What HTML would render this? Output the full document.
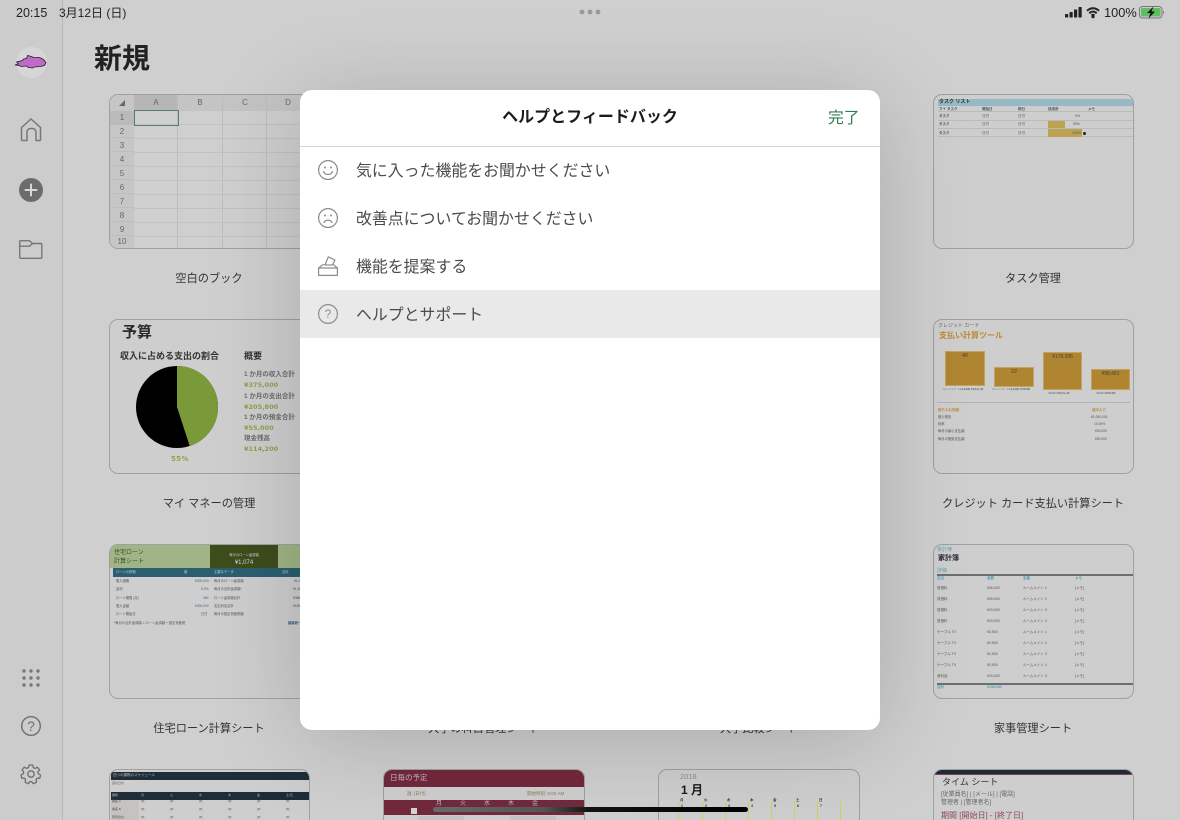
<!DOCTYPE html>
<html lang="ja"><head><meta charset="utf-8"><title>ヘルプとフィードバック</title>
<style>
*{box-sizing:border-box;margin:0;padding:0}
html,body{width:1180px;height:820px;overflow:hidden;background:#cfcfcf;font-family:"Liberation Sans","Noto Sans CJK JP",sans-serif;color:#222}
div,span{position:absolute;white-space:nowrap}
svg{position:absolute;overflow:visible}
#root{left:0;top:0;width:1180px;height:820px;overflow:hidden;background:#cfcfcf}
#back{left:0;top:0;width:1180px;height:820px;overflow:hidden;filter:blur(.3px)}
#side{left:0;top:0;width:63px;height:820px;background:#cccccc;border-right:1px solid #b5b6b5}
.card{width:201px;height:155px;border:1px solid #a0a0a0;border-radius:9px;overflow:hidden;background:#cecece}
.inner{left:0;top:0;width:199px;height:153px;filter:blur(.35px)}
.r4{height:51px;border-bottom:0;border-radius:9px 9px 0 0}
.r4 .inner{height:50px;overflow:hidden}
.lab{font-size:11.2px;color:#333;width:274px;text-align:center;line-height:16px}
.t{font-size:5px;line-height:7px;color:#555}
.b{font-weight:bold}
#modal{left:300px;top:90px;width:580px;height:640px;background:#fff;border-radius:12px;overflow:hidden;box-shadow:0 10px 90px rgba(0,0,0,.18)}
.row{left:56px;font-size:15.9px;line-height:24px;color:#4b4b4b}
.h{font-size:8px;color:#666;line-height:10px;text-align:center}
.rn{font-size:8px;color:#666;line-height:14px;width:24px;text-align:center;left:0}
</style></head><body>
<div id="root">
<div id="back">
<div id="side"></div>

<div style="left:16px;top:4.500px;font-size:12.500px;line-height:16px;color:#222">20:15</div>
<div style="left:59px;top:4.500px;font-size:12px;line-height:16px;color:#222">3月12日 (日)</div>
<svg style="left:579px;top:9px" width="22" height="6"><circle cx="3" cy="3" r="2.400" fill="#9a9a9a"/><circle cx="11" cy="3" r="2.400" fill="#9a9a9a"/><circle cx="19" cy="3" r="2.400" fill="#9a9a9a"/></svg>
<svg style="left:1065px;top:7px" width="18" height="11"><rect x="0" y="7" width="3.200" height="3.500" rx=".6" fill="#222"/><rect x="4.500" y="5" width="3.200" height="5.500" rx=".6" fill="#222"/><rect x="9" y="2.500" width="3.200" height="8" rx=".6" fill="#222"/><rect x="13.500" y="0" width="3.200" height="10.500" rx=".6" fill="#222"/></svg>
<svg style="left:1086px;top:7px" width="14" height="11" fill="none" stroke="#222" stroke-width="2"><path d="M1 3.800C4.600 .4 9.400 .4 13 3.800"/><path d="M3.300 6.200C5.600 4.100 8.400 4.100 10.700 6.200"/><path d="M5.500 8.400C6.400 7.600 7.600 7.600 8.500 8.400"/><circle cx="7" cy="9.700" r=".6" fill="#222"/></svg>
<div style="left:1104px;top:4.500px;font-size:12.800px;line-height:16px;color:#222">100%</div>
<svg style="left:1139px;top:6px" width="26" height="13"><rect x=".5" y=".5" width="22.500" height="11.500" rx="3" fill="none" stroke="#777"/><rect x="2" y="2" width="19.500" height="8.500" rx="1.500" fill="#5fbe62"/><path d="M24 4.500c1.300.3 1.300 3.200 0 3.500z" fill="#777"/><path d="M14.500 .5L8 7h3.500l-2 5.500L16 5.500h-3.500z" fill="#111"/></svg>

<!-- sidebar icons -->
<div style="left:16px;top:47px;width:31px;height:31px;border-radius:50%;background:#d6d6d6"></div>
<svg style="left:0;top:0" width="60" height="80"><path d="M16.500 62l6-1.500 1-1.500 3-.5 1-3 4 1 2 1 6 0 4 2 2.500 3-1.500 3-4 1-6 .500-2 1-4-.5-2-1.500-5 .5-3-1-3.500-.5 3.500-1.200z" fill="#bf69c8" stroke="#26222a" stroke-width=".8"/></svg>
<svg style="left:20px;top:118px" width="22" height="24" fill="none" stroke="#777" stroke-width="1.500" stroke-linejoin="round"><path d="M1.500 9.500L11 1l9.500 8.500V21.500a1 1 0 0 1-1 1h-3.500V14a3.500 3.500 0 0 0-3.500-3.500h-1.500A3.500 3.500 0 0 0 7 14v8.500H2.500a1 1 0 0 1-1-1z"/></svg>
<svg style="left:19px;top:178px" width="24" height="24"><circle cx="12" cy="12" r="12" fill="#6c6c6c"/><path d="M12 6.500v11M6.500 12h11" stroke="#d8d8d8" stroke-width="2" stroke-linecap="round"/></svg>
<svg style="left:19px;top:240px" width="24" height="20" fill="none" stroke="#777" stroke-width="1.400" stroke-linejoin="round"><path d="M.7 1.700a1 1 0 0 1 1-1h8.800l3 2.800h8.300a1 1 0 0 1 1 1v12.800a1 1 0 0 1-1 1H1.700a1 1 0 0 1-1-1z"/><path d="M.7 6.200h9.800l3-2.700"/></svg>
<svg style="left:22px;top:669px" width="18" height="18" fill="#777"><circle cx="2" cy="2" r="1.700"/><circle cx="9" cy="2" r="1.700"/><circle cx="16" cy="2" r="1.700"/><circle cx="2" cy="9" r="1.700"/><circle cx="9" cy="9" r="1.700"/><circle cx="16" cy="9" r="1.700"/><circle cx="2" cy="16" r="1.700"/><circle cx="9" cy="16" r="1.700"/><circle cx="16" cy="16" r="1.700"/></svg>
<svg style="left:21px;top:716px" width="20" height="20" fill="none" stroke="#6f6f6f" stroke-width="1.400"><circle cx="10" cy="10" r="9.300"/></svg>
<div style="left:21px;top:716px;width:20px;text-align:center;font-size:14px;line-height:20px;color:#6f6f6f">?</div>
<svg style="left:21px;top:764px" width="20" height="20" fill="none" stroke="#6f6f6f" stroke-width="1.300" stroke-linejoin="round"><path d="M8.300 1h3.400l.6 2.600 1.700.8 2.400-1.200 2.200 2.700-1.700 2 .4 1.900 2.300 1.100-.8 3.300-2.600 0-1.200 1.500.5 2.600-3.200 1.400-1.600-2.100h-1.800l-1.600 2.100-3.200-1.400.5-2.600-1.200-1.500-2.600 0-.8-3.300 2.300-1.100.4-1.900-1.700-2 2.200-2.700 2.400 1.200 1.700-.8z"/><circle cx="10" cy="10" r="3.200"/></svg>

<div style="left:94px;top:41px;font-size:28px;line-height:36px;font-weight:bold;color:#222">新規</div>

<!-- blank sheet -->
<div class="card" style="left:109px;top:94px;background:#cfcfcf"><div class="inner" style="filter:none">
  <div style="left:0;top:0;width:199px;height:16px;background:#c3c4c3"></div>
  <div style="left:0;top:0;width:24px;height:153px;background:#c5c6c5"></div>
  <div style="left:24px;top:0;width:44px;height:16px;background:#b5b6b5"></div>
  <div style="left:0;top:16px;width:24px;height:14px;background:#b9bab9"></div>
  <div style="left:24px;top:16px;width:175px;height:137px;background-image:repeating-linear-gradient(to bottom,transparent 0,transparent 13px,#c1c2c1 13px,#c1c2c1 14px)"></div>
  <div style="left:0;top:29px;width:24px;height:124px;background-image:repeating-linear-gradient(to bottom,transparent 0,transparent 13px,#bcbdbc 13px,#bcbdbc 14px)"></div>
  <div style="left:67px;top:0;width:1px;height:153px;background:#bcbdbc"></div>
  <div style="left:112px;top:0;width:1px;height:153px;background:#bcbdbc"></div>
  <div style="left:156px;top:0;width:1px;height:153px;background:#bcbdbc"></div>
  <svg style="left:8px;top:4px" width="8" height="8"><path d="M7 1v6H1z" fill="#666"/></svg>
  <div class="h" style="left:24px;top:3px;width:44px">A</div><div class="h" style="left:68px;top:3px;width:44px">B</div><div class="h" style="left:113px;top:3px;width:44px">C</div><div class="h" style="left:157px;top:3px;width:42px">D</div>
  <div class="rn" style="top:16px">1</div><div class="rn" style="top:30px">2</div><div class="rn" style="top:44px">3</div><div class="rn" style="top:58px">4</div><div class="rn" style="top:72px">5</div><div class="rn" style="top:86px">6</div><div class="rn" style="top:100px">7</div><div class="rn" style="top:114px">8</div><div class="rn" style="top:128px">9</div><div class="rn" style="top:140px;line-height:13px">10</div>
  <div style="left:24px;top:15px;width:45px;height:16px;border:1px solid #5d7c68"></div>
</div></div>
<div class="lab" style="left:72px;top:271px">空白のブック</div>

<!-- task -->
<div class="card" style="left:933px;top:94px"><div class="inner">
  <div style="left:4px;top:4px;width:195px;height:7px;background:#97b9c3"></div>
  <div class="t b" style="left:5px;top:4px;color:#333">タスク リスト</div>
  <div class="t b" style="left:5px;top:11px;font-size:3.500px;color:#456">マイ タスク</div><div class="t b" style="left:48px;top:11px;font-size:3.500px;color:#456">開始日</div><div class="t b" style="left:84px;top:11px;font-size:3.500px;color:#456">期日</div><div class="t b" style="left:114px;top:11px;font-size:3.500px;color:#456">達成度</div><div class="t b" style="left:154px;top:11px;font-size:3.500px;color:#456">メモ</div>
  <div style="left:4px;top:16px;width:195px;height:1px;background:#bbb"></div><div style="left:4px;top:25px;width:195px;height:1px;background:#bbb"></div><div style="left:4px;top:33px;width:195px;height:1px;background:#bbb"></div><div style="left:4px;top:41px;width:195px;height:1px;background:#bbb"></div>
  <div style="left:114px;top:26px;width:17px;height:7px;background:#bda252"></div><div style="left:114px;top:34px;width:34px;height:8px;background:#bda252"></div>
  <div class="t b" style="left:5px;top:18px;font-size:3.500px">タスク</div><div class="t" style="left:48px;top:18px;font-size:3.500px">日付</div><div class="t" style="left:84px;top:18px;font-size:3.500px">日付</div><div class="t" style="left:141px;top:18px;font-size:3.500px">0%</div>
  <div class="t b" style="left:5px;top:26px;font-size:3.500px">タスク</div><div class="t" style="left:48px;top:26px;font-size:3.500px">日付</div><div class="t" style="left:84px;top:26px;font-size:3.500px">日付</div><div class="t" style="left:139px;top:26px;font-size:3.500px">50%</div>
  <div class="t b" style="left:5px;top:35px;font-size:3.500px">タスク</div><div class="t" style="left:48px;top:35px;font-size:3.500px">日付</div><div class="t" style="left:84px;top:35px;font-size:3.500px">日付</div><div class="t" style="left:138px;top:35px;font-size:3.500px">100%</div>
  <div style="left:149px;top:37px;width:3px;height:3px;border-radius:50%;background:#222"></div>
</div></div>
<div class="lab" style="left:896px;top:271px">タスク管理</div>

<!-- budget -->
<div class="card" style="left:109px;top:319px"><div class="inner">
  <div class="b" style="left:12px;top:4px;font-size:15px;line-height:18px;color:#2b2b2b">予算</div>
  <div class="b" style="left:10px;top:30px;font-size:9px;line-height:12px;color:#333">収入に占める支出の割合</div>
  <div class="b" style="left:134px;top:30px;font-size:9px;line-height:12px;color:#333">概要</div>
  <svg style="left:25px;top:45px" width="84" height="84"><circle cx="42" cy="42" r="41" fill="#000"/><path d="M42 42V1A41 41 0 0 1 54.700 81z" fill="#7a9a3a"/></svg>
  <div class="b" style="left:61px;top:134px;font-size:7px;line-height:10px;color:#8ba550;letter-spacing:.3px;font-family:'DejaVu Sans',sans-serif">55%</div>
  <div class="b" style="left:134px;top:50px;font-size:6.500px;line-height:9px;color:#6b6b6b">1 か月の収入合計</div>
  <div class="b" style="left:134px;top:61px;font-size:6.500px;line-height:9px;color:#8aa450;font-family:'DejaVu Sans',sans-serif">¥375,000</div>
  <div class="b" style="left:134px;top:72px;font-size:6.500px;line-height:9px;color:#6b6b6b">1 か月の支出合計</div>
  <div class="b" style="left:134px;top:83px;font-size:6.500px;line-height:9px;color:#8aa450;font-family:'DejaVu Sans',sans-serif">¥205,800</div>
  <div class="b" style="left:134px;top:93px;font-size:6.500px;line-height:9px;color:#6b6b6b">1 か月の預金合計</div>
  <div class="b" style="left:134px;top:104px;font-size:6.500px;line-height:9px;color:#8aa450;font-family:'DejaVu Sans',sans-serif">¥55,000</div>
  <div class="b" style="left:134px;top:114px;font-size:6.500px;line-height:9px;color:#6b6b6b">現金残高</div>
  <div class="b" style="left:134px;top:125px;font-size:6.500px;line-height:9px;color:#8aa450;font-family:'DejaVu Sans',sans-serif">¥114,200</div>
</div></div>
<div class="lab" style="left:72px;top:496px">マイ マネーの管理</div>

<!-- credit -->
<div class="card" style="left:933px;top:319px"><div class="inner">
  <div class="t" style="left:4px;top:3px;font-size:5px;color:#666">クレジット カード</div>
  <div class="b" style="left:5px;top:10px;font-size:8px;line-height:12px;color:#bd8a34">支払い計算ツール</div>
  <div style="left:11px;top:31px;width:40px;height:35px;background:#b08532;border:1px solid #c3a15f"></div>
  <div style="left:60px;top:47px;width:40px;height:20px;background:#b08532;border:1px solid #c3a15f"></div>
  <div style="left:109px;top:32px;width:39px;height:38px;background:#b08532;border:1px solid #c3a15f"></div>
  <div style="left:157px;top:49px;width:39px;height:21px;background:#b08532;border:1px solid #c3a15f"></div>
  <div class="t" style="left:11px;top:33px;width:40px;text-align:center;font-size:5.500px;color:#4a4030">40</div>
  <div class="t" style="left:60px;top:49px;width:40px;text-align:center;font-size:5.500px;color:#4a4030">22</div>
  <div class="t" style="left:109px;top:34px;width:39px;text-align:center;font-size:5px;color:#4a4030">¥178,395</div>
  <div class="t" style="left:157px;top:51px;width:39px;text-align:center;font-size:5px;color:#4a4030">¥98,481</div>
  <div class="t" style="left:9px;top:67px;font-size:2.100px;color:#444">クレジットカードの支払回数 最低支払い額</div>
  <div class="t" style="left:58px;top:67px;font-size:2.100px;color:#444">クレジットカードの支払回数 最低返済額</div>
  <div class="t" style="left:114px;top:71px;font-size:2.100px;color:#444">合計金利 最低支払い額</div>
  <div class="t" style="left:162px;top:71px;font-size:2.100px;color:#444">合計金利 最低返済額</div>
  <div style="left:3px;top:82px;width:193px;height:1px;background:#b2b2b2"></div>
  <div class="t b" style="left:4px;top:87px;font-size:3.500px;color:#b98c3c">借り入れ詳細</div>
  <div class="t b" style="left:158px;top:87px;font-size:3.500px;color:#b98c3c">値の入力</div>
  <div class="t" style="left:4px;top:94px;font-size:3.300px">借入残高</div><div class="t" style="left:157px;top:94px;font-size:3.300px">¥1,000,000</div>
  <div class="t" style="left:4px;top:101px;font-size:3.300px">利率</div><div class="t" style="left:160px;top:101px;font-size:3.300px">10.00%</div>
  <div class="t" style="left:4px;top:108px;font-size:3.300px">毎月の最小支払額</div><div class="t" style="left:161px;top:108px;font-size:3.300px">¥30,000</div>
  <div class="t" style="left:4px;top:116px;font-size:3.300px">毎月の推奨支払額</div><div class="t" style="left:161px;top:116px;font-size:3.300px">¥50,000</div>
</div></div>
<div class="lab" style="left:896px;top:496px">クレジット カード支払い計算シート</div>

<!-- mortgage -->
<div class="card" style="left:109px;top:544px"><div class="inner">
  <div style="left:0;top:0;width:199px;height:23px;background:#9fb585"></div>
  <div style="left:100px;top:0;width:68px;height:23px;background:#3e4d1c"></div>
  <div class="t" style="left:4px;top:4px;font-size:6px;line-height:8px;color:#3a4a2a">住宅ローン</div>
  <div class="t" style="left:4px;top:13px;font-size:6px;line-height:8px;color:#3a4a2a">計算シート</div>
  <div class="t" style="left:100px;top:7px;width:68px;text-align:center;font-size:3.300px;color:#ccd">毎月のローン返済額</div>
  <div class="t" style="left:100px;top:14px;width:68px;text-align:center;font-size:6px;line-height:8px;color:#cdd">¥1,074</div>
  <div style="left:3px;top:23px;width:196px;height:9px;background:#2b5f70"></div>
  <div class="t" style="left:6px;top:24px;font-size:3.300px;color:#bcd">ローンの詳細</div><div class="t" style="left:74px;top:24px;font-size:3.300px;color:#bcd">値</div><div class="t" style="left:104px;top:24px;font-size:3.300px;color:#bcd">主要なデータ</div><div class="t" style="left:172px;top:24px;font-size:3.300px;color:#bcd">合計</div>
  <div class="t" style="left:6px;top:33px;font-size:3.300px">購入価格</div><div class="t" style="left:85px;top:33px;font-size:3.300px;color:#467">¥300,000</div><div class="t" style="left:104px;top:33px;font-size:3.300px">毎月のローン返済額</div><div class="t" style="left:184px;top:33px;font-size:3.300px">¥1,074</div>
  <div class="t" style="left:6px;top:41px;font-size:3.300px">金利</div><div class="t" style="left:91px;top:41px;font-size:3.300px;color:#467">5.0%</div><div class="t" style="left:104px;top:41px;font-size:3.300px">毎月の合計返済額*</div><div class="t" style="left:183px;top:41px;font-size:3.300px">¥1,520</div>
  <div class="t" style="left:6px;top:50px;font-size:3.300px">ローン期間 (月)</div><div class="t" style="left:93px;top:50px;font-size:3.300px;color:#467">360</div><div class="t" style="left:104px;top:50px;font-size:3.300px">ローン返済額合計</div><div class="t" style="left:183px;top:50px;font-size:3.300px">¥386,511</div>
  <div class="t" style="left:6px;top:58px;font-size:3.300px">借入金額</div><div class="t" style="left:85px;top:58px;font-size:3.300px;color:#467">¥300,000</div><div class="t" style="left:104px;top:58px;font-size:3.300px">支払利息合計</div><div class="t" style="left:183px;top:58px;font-size:3.300px">¥189,767</div>
  <div class="t" style="left:6px;top:66px;font-size:3.300px">ローン開始日</div><div class="t" style="left:91px;top:66px;font-size:3.300px;color:#467">日付</div><div class="t" style="left:104px;top:66px;font-size:3.300px">毎月の固定資産税額</div>
  <div class="t" style="left:4px;top:75px;font-size:3.300px">*毎月の合計返済額 = ローン返済額 + 固定資産税</div>
  <div class="t b" style="left:178px;top:75px;font-size:3.300px;color:#357">最新統一</div>
</div></div>
<div class="lab" style="left:72px;top:721px">住宅ローン計算シート</div>

<!-- household -->
<div class="card" style="left:933px;top:544px"><div class="inner">
  <div class="t" style="left:3px;top:2px;font-size:5px;color:#5ea6b4">家計簿</div>
  <div class="b" style="left:4px;top:9px;font-size:7px;line-height:10px;color:#222">家計簿</div>
  <div class="t" style="left:3px;top:23px;font-size:5px;color:#5ea6b4">詳細</div>
  <div style="left:3px;top:29px;width:196px;height:1.500px;background:#6e6e6e"></div>
  <div class="t b" style="left:3px;top:30px;font-size:3.500px;color:#4f9cb0">支出</div><div class="t b" style="left:53px;top:30px;font-size:3.500px;color:#4f9cb0">金額</div><div class="t b" style="left:89px;top:30px;font-size:3.500px;color:#4f9cb0">名義</div><div class="t b" style="left:141px;top:30px;font-size:3.500px;color:#4f9cb0">メモ</div>
  <div class="t" style="left:3px;top:40px;font-size:3.500px">賃借料</div><div class="t" style="left:53px;top:40px;font-size:3.500px">¥36,000</div><div class="t" style="left:89px;top:40px;font-size:3.500px">ルームメイト 1</div><div class="t" style="left:141px;top:40px;font-size:3.500px">[メモ]</div>
  <div class="t" style="left:3px;top:51px;font-size:3.500px">賃借料</div><div class="t" style="left:53px;top:51px;font-size:3.500px">¥35,000</div><div class="t" style="left:89px;top:51px;font-size:3.500px">ルームメイト 2</div><div class="t" style="left:141px;top:51px;font-size:3.500px">[メモ]</div>
  <div class="t" style="left:3px;top:62px;font-size:3.500px">賃借料</div><div class="t" style="left:53px;top:62px;font-size:3.500px">¥20,000</div><div class="t" style="left:89px;top:62px;font-size:3.500px">ルームメイト 3</div><div class="t" style="left:141px;top:62px;font-size:3.500px">[メモ]</div>
  <div class="t" style="left:3px;top:73px;font-size:3.500px">賃借料</div><div class="t" style="left:53px;top:73px;font-size:3.500px">¥20,000</div><div class="t" style="left:89px;top:73px;font-size:3.500px">ルームメイト 4</div><div class="t" style="left:141px;top:73px;font-size:3.500px">[メモ]</div>
  <div class="t" style="left:3px;top:84px;font-size:3.500px">ケーブル TV</div><div class="t" style="left:53px;top:84px;font-size:3.500px">¥2,500</div><div class="t" style="left:89px;top:84px;font-size:3.500px">ルームメイト 1</div><div class="t" style="left:141px;top:84px;font-size:3.500px">[メモ]</div>
  <div class="t" style="left:3px;top:95px;font-size:3.500px">ケーブル TV</div><div class="t" style="left:53px;top:95px;font-size:3.500px">¥2,500</div><div class="t" style="left:89px;top:95px;font-size:3.500px">ルームメイト 2</div><div class="t" style="left:141px;top:95px;font-size:3.500px">[メモ]</div>
  <div class="t" style="left:3px;top:106px;font-size:3.500px">ケーブル TV</div><div class="t" style="left:53px;top:106px;font-size:3.500px">¥2,500</div><div class="t" style="left:89px;top:106px;font-size:3.500px">ルームメイト 3</div><div class="t" style="left:141px;top:106px;font-size:3.500px">[メモ]</div>
  <div class="t" style="left:3px;top:117px;font-size:3.500px">ケーブル TV</div><div class="t" style="left:53px;top:117px;font-size:3.500px">¥2,500</div><div class="t" style="left:89px;top:117px;font-size:3.500px">ルームメイト 4</div><div class="t" style="left:141px;top:117px;font-size:3.500px">[メモ]</div>
  <div class="t" style="left:3px;top:128px;font-size:3.500px">食料品</div><div class="t" style="left:53px;top:128px;font-size:3.500px">¥15,000</div><div class="t" style="left:89px;top:128px;font-size:3.500px">ルームメイト 3</div><div class="t" style="left:141px;top:128px;font-size:3.500px">[メモ]</div>
  <div style="left:3px;top:138px;width:196px;height:1.500px;background:#6e6e6e"></div>
  <div class="t b" style="left:3px;top:139px;font-size:3.500px;color:#4f9cb0">合計</div><div class="t b" style="left:53px;top:139px;font-size:3.500px;color:#4f9cb0">¥136,000</div>
</div></div>
<div class="lab" style="left:896px;top:721px">家事管理シート</div>

<!-- hidden labels -->
<div class="lab" style="left:347px;top:721px">大学の科目管理シート</div>
<div class="lab" style="left:622px;top:721px">大学比較シート</div>

<!-- row 4 -->
<div class="card r4" style="left:109px;top:769px"><div class="inner">
  <div style="left:1px;top:2px;width:198px;height:8px;background:#1f2d38"></div>
  <div class="t" style="left:3px;top:2px;font-size:3.500px;color:#bbb">四つの課題のスケジュール</div>
  <div class="t" style="left:2px;top:11px;font-size:3px;line-height:5px">週の日付</div>
  <div style="left:1px;top:22px;width:198px;height:8px;background:#1f2d38"></div>
  <div class="t" style="left:2px;top:22px;font-size:3px;color:#bbb">課題</div><div class="t" style="left:31px;top:22px;font-size:3px;color:#bbb">月</div><div class="t" style="left:60px;top:22px;font-size:3px;color:#bbb">火</div><div class="t" style="left:89px;top:22px;font-size:3px;color:#bbb">水</div><div class="t" style="left:118px;top:22px;font-size:3px;color:#bbb">木</div><div class="t" style="left:147px;top:22px;font-size:3px;color:#bbb">金</div><div class="t" style="left:176px;top:22px;font-size:3px;color:#bbb">土/日</div>
  <div style="left:1px;top:30px;width:28px;height:20px;background:#c5c3c0"></div>
  <div class="t" style="left:2px;top:29px;font-size:3px;line-height:5px">講座 A</div><div class="t" style="left:2px;top:37px;font-size:3px;line-height:5px">講座 B</div><div class="t" style="left:2px;top:45px;font-size:3px;line-height:5px">研究会社</div>
  <div class="t" style="left:31px;top:29px;font-size:3px;line-height:5px">[#]</div><div class="t" style="left:60px;top:29px;font-size:3px;line-height:5px">[#]</div><div class="t" style="left:89px;top:29px;font-size:3px;line-height:5px">[#]</div><div class="t" style="left:118px;top:29px;font-size:3px;line-height:5px">[#]</div><div class="t" style="left:147px;top:29px;font-size:3px;line-height:5px">[#]</div><div class="t" style="left:176px;top:29px;font-size:3px;line-height:5px">[#]</div>
  <div class="t" style="left:31px;top:37px;font-size:3px;line-height:5px">[#]</div><div class="t" style="left:60px;top:37px;font-size:3px;line-height:5px">[#]</div><div class="t" style="left:89px;top:37px;font-size:3px;line-height:5px">[#]</div><div class="t" style="left:118px;top:37px;font-size:3px;line-height:5px">[#]</div><div class="t" style="left:147px;top:37px;font-size:3px;line-height:5px">[#]</div><div class="t" style="left:176px;top:37px;font-size:3px;line-height:5px">[#]</div>
  <div class="t" style="left:31px;top:45px;font-size:3px;line-height:5px">[#]</div><div class="t" style="left:60px;top:45px;font-size:3px;line-height:5px">[#]</div><div class="t" style="left:89px;top:45px;font-size:3px;line-height:5px">[#]</div><div class="t" style="left:118px;top:45px;font-size:3px;line-height:5px">[#]</div><div class="t" style="left:147px;top:45px;font-size:3px;line-height:5px">[#]</div><div class="t" style="left:176px;top:45px;font-size:3px;line-height:5px">[#]</div>
</div></div>
<div class="card r4" style="left:383px;top:769px;width:202px"><div class="inner" style="width:200px">
  <div style="left:0;top:0;width:200px;height:17px;background:#72293c"></div>
  <div class="t" style="left:6px;top:2px;font-size:7.500px;line-height:12px;color:#c9b9bc">日毎の予定</div>
  <div class="t" style="left:23px;top:20px;font-size:4.500px;color:#8a7d50">週: [日付]</div>
  <div class="t" style="left:143px;top:20px;font-size:4.500px;color:#8a7d50">開始時刻: 5:00 AM</div>
  <div style="left:0;top:30px;width:200px;height:15px;background:#72293c"></div>
  <div style="left:27px;top:38px;width:6px;height:6px;background:#d5d5d5"></div>
  <div class="t" style="left:52px;top:31px;font-size:6px;color:#c9b9bc">月</div><div class="t" style="left:76px;top:31px;font-size:6px;color:#c9b9bc">火</div><div class="t" style="left:100px;top:31px;font-size:6px;color:#c9b9bc">水</div><div class="t" style="left:124px;top:31px;font-size:6px;color:#c9b9bc">木</div><div class="t" style="left:148px;top:31px;font-size:6px;color:#c9b9bc">金</div>
  <div style="left:34px;top:46px;width:46px;height:4px;background:#c4c4c4"></div>
  <div style="left:126px;top:46px;width:46px;height:4px;background:#c4c4c4"></div>
</div></div>
<div class="card r4" style="left:658px;top:769px;width:202px"><div class="inner" style="width:200px">
  <div class="t" style="left:21px;top:1px;font-size:7.500px;line-height:12px;color:#8d8d8d">2018</div>
  <div class="b" style="left:22px;top:12px;font-size:12px;line-height:16px;color:#1b1b1b">1 月</div>
  <div style="left:19px;top:32px;width:1px;height:18px;background:#d3cf5a"></div><div style="left:43px;top:32px;width:1px;height:18px;background:#d3cf5a"></div><div style="left:66px;top:32px;width:1px;height:18px;background:#d3cf5a"></div><div style="left:89px;top:32px;width:1px;height:18px;background:#d3cf5a"></div><div style="left:112px;top:32px;width:1px;height:18px;background:#d3cf5a"></div><div style="left:135px;top:32px;width:1px;height:18px;background:#d3cf5a"></div><div style="left:158px;top:32px;width:1px;height:18px;background:#d3cf5a"></div><div style="left:181px;top:32px;width:1px;height:18px;background:#d3cf5a"></div>
  <div class="t b" style="left:21px;top:27px;font-size:3.500px;color:#333">月</div><div class="t b" style="left:45px;top:27px;font-size:3.500px;color:#333">火</div><div class="t b" style="left:68px;top:27px;font-size:3.500px;color:#333">水</div><div class="t b" style="left:91px;top:27px;font-size:3.500px;color:#333">木</div><div class="t b" style="left:114px;top:27px;font-size:3.500px;color:#333">金</div><div class="t b" style="left:137px;top:27px;font-size:3.500px;color:#333">土</div><div class="t b" style="left:160px;top:27px;font-size:3.500px;color:#333">日</div>
  <div class="t b" style="left:22px;top:33px;font-size:3.500px;color:#333">1</div><div class="t b" style="left:46px;top:33px;font-size:3.500px;color:#333">2</div><div class="t b" style="left:69px;top:33px;font-size:3.500px;color:#333">3</div><div class="t b" style="left:92px;top:33px;font-size:3.500px;color:#333">4</div><div class="t b" style="left:115px;top:33px;font-size:3.500px;color:#333">5</div><div class="t b" style="left:138px;top:33px;font-size:3.500px;color:#333">6</div><div class="t b" style="left:161px;top:33px;font-size:3.500px;color:#333">7</div>
</div></div>
<div class="card r4" style="left:933px;top:769px"><div class="inner">
  <div style="left:0;top:0;width:199px;height:4px;background:#1e2b38"></div>
  <div style="left:0;top:4px;width:199px;height:1px;background:#8a4050"></div>
  <div class="t" style="left:8px;top:5px;font-size:9px;line-height:14px;color:#333">タイム シート</div>
  <div class="t" style="left:7px;top:21px;font-size:6px;line-height:8px;color:#666">[従業員名] | [メール] | [電話]</div>
  <div class="t" style="left:7px;top:29px;font-size:6px;line-height:8px;color:#666">管理者 | [管理者名]</div>
  <div class="t" style="left:7px;top:41px;font-size:8px;line-height:9px;color:#8e4a5a">期間 [開始日] - [終了日]</div>
</div></div>
</div>

<!-- modal -->
<div id="modal">
  <div style="left:0;top:1px;width:580px;text-align:center;font-size:16px;line-height:54px;font-weight:bold;color:#1c1c1c;height:54px">ヘルプとフィードバック</div>
  <div style="left:528px;top:17px;font-size:15.800px;line-height:24px;color:#2f7d52">完了</div>
  <div style="left:0;top:56px;width:580px;height:1px;background:#d4d4d4"></div>
  <div style="left:0;top:200px;width:580px;height:48px;background:#e9e9e9"></div>
  <div class="row" style="top:69.500px">気に入った機能をお聞かせください</div>
  <div class="row" style="top:117.500px">改善点についてお聞かせください</div>
  <div class="row" style="top:165.500px">機能を提案する</div>
  <div class="row" style="top:213.500px">ヘルプとサポート</div>
  <svg style="left:18px;top:70px" width="20" height="20" fill="none" stroke="#8c8c8c" stroke-width="1.200"><circle cx="10" cy="10" r="9.400"/><path d="M5.500 11.500C7 15.500 13 15.500 14.500 11.500" stroke-linecap="round"/><circle cx="7" cy="7.500" r="1" fill="#8c8c8c" stroke="none"/><circle cx="13" cy="7.500" r="1" fill="#8c8c8c" stroke="none"/></svg>
  <svg style="left:18px;top:118px" width="20" height="20" fill="none" stroke="#8c8c8c" stroke-width="1.200"><circle cx="10" cy="10" r="9.400"/><path d="M6 14.500C7.500 11.500 12.500 11.500 14 14.500" stroke-linecap="round"/><circle cx="7" cy="7.500" r="1" fill="#8c8c8c" stroke="none"/><circle cx="13" cy="7.500" r="1" fill="#8c8c8c" stroke="none"/></svg>
  <svg style="left:18px;top:166px" width="20" height="20" fill="none" stroke="#8c8c8c" stroke-width="1.200" stroke-linejoin="round"><path d="M.6 12H19.400V19.400H.6z"/><path d="M.6 12L4.800 8.700H7M19.400 12L15.500 8.700H14.300"/><path d="M7 9H14.300"/><path d="M7 9L10.300 .9 17 4 14.300 9"/></svg>
  <svg style="left:18px;top:214px" width="20" height="20" fill="none" stroke="#8c8c8c" stroke-width="1.200"><circle cx="10" cy="10" r="9.400"/></svg>
  <div style="left:18px;top:214px;width:20px;text-align:center;font-size:12px;line-height:20px;color:#8c8c8c">?</div>
</div>

<!-- home indicator -->
<div style="left:433px;top:807px;width:315px;height:5px;border-radius:3px;background:linear-gradient(to right,#6a6a6a 0,#555 35%,#111 50%,#000 100%)"></div>
</div>
</body></html>
